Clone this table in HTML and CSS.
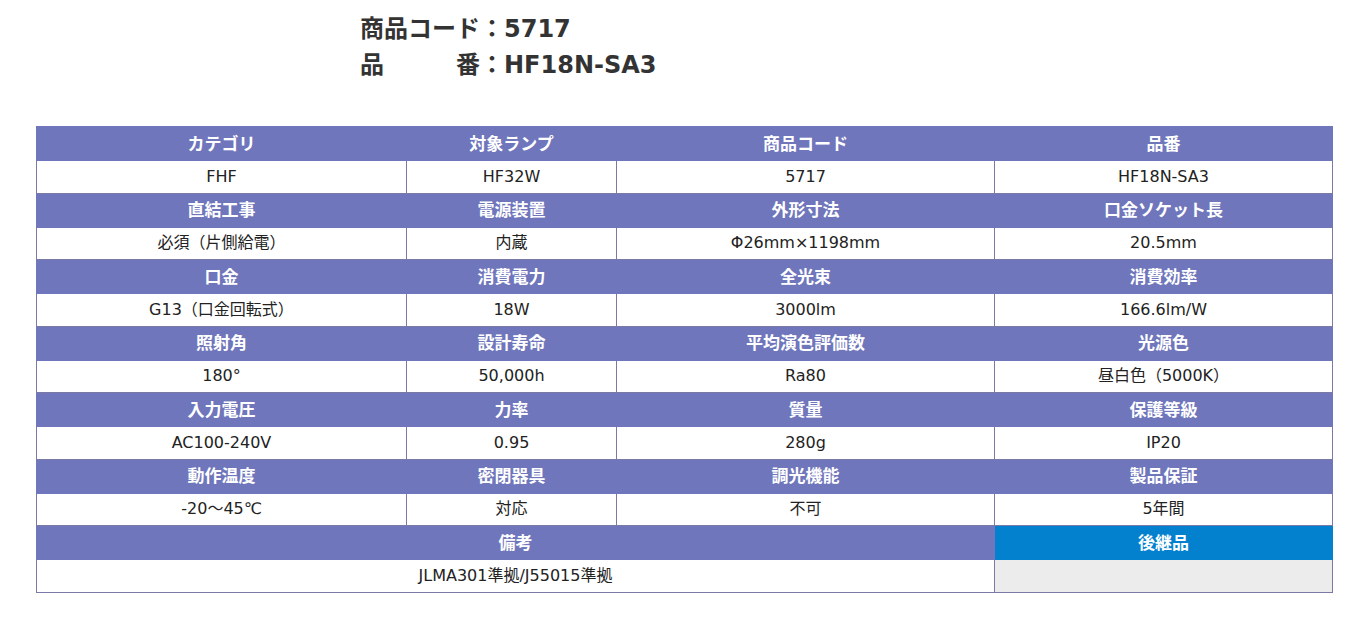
FILE: index.html
```html
<!DOCTYPE html>
<html lang="ja">
<head>
<meta charset="utf-8">
<title>HF18N-SA3</title>
<link rel="stylesheet" href="styles.css">
</head>
<body>
<div class="page">
  <div class="heading">
    <div class="heading-line">商品コード：5717</div>
    <div class="heading-line">品　　　番：HF18N-SA3</div>
  </div>
  <table class="spec">
    <colgroup>
      <col class="c1"><col class="c2"><col class="c3"><col class="c4">
    </colgroup>
    <tr class="hd"><th>カテゴリ</th><th>対象ランプ</th><th>商品コード</th><th>品番</th></tr>
    <tr class="dt"><td>FHF</td><td>HF32W</td><td>5717</td><td>HF18N-SA3</td></tr>
    <tr class="hd"><th>直結工事</th><th>電源装置</th><th>外形寸法</th><th>口金ソケット長</th></tr>
    <tr class="dt"><td>必須（片側給電）</td><td>内蔵</td><td>Φ26mm×1198mm</td><td>20.5mm</td></tr>
    <tr class="hd"><th>口金</th><th>消費電力</th><th>全光束</th><th>消費効率</th></tr>
    <tr class="dt"><td>G13（口金回転式）</td><td>18W</td><td>3000lm</td><td>166.6lm/W</td></tr>
    <tr class="hd"><th>照射角</th><th>設計寿命</th><th>平均演色評価数</th><th>光源色</th></tr>
    <tr class="dt"><td>180°</td><td>50,000h</td><td>Ra80</td><td>昼白色（5000K）</td></tr>
    <tr class="hd"><th>入力電圧</th><th>力率</th><th>質量</th><th>保護等級</th></tr>
    <tr class="dt"><td>AC100-240V</td><td>0.95</td><td>280g</td><td>IP20</td></tr>
    <tr class="hd"><th>動作温度</th><th>密閉器具</th><th>調光機能</th><th>製品保証</th></tr>
    <tr class="dt"><td>-20～45℃</td><td>対応</td><td>不可</td><td>5年間</td></tr>
    <tr class="hd"><th colspan="3">備考</th><th class="succ">後継品</th></tr>
    <tr class="dt"><td colspan="3">JLMA301準拠/J55015準拠</td><td class="empty"></td></tr>
  </table>
</div>
</body>
</html>
```

FILE: styles.css
```css
html, body {
  margin: 0;
  padding: 0;
  background: #ffffff;
}
.page {
  padding: 11px 35px 0 36px;
  font-family: "DejaVu Sans", "Noto Sans CJK JP", sans-serif;
  color: #333333;
}
.heading {
  padding-left: 324px;
  margin-bottom: 43px;
}
.heading-line {
  font-size: 24px;
  font-weight: bold;
  line-height: 36px;
  color: #333333;
}
.spec {
  width: 1296px;
  border-collapse: collapse;
  table-layout: fixed;
  border: 1px solid #7b79a6;
}
.c1 { width: 370px; }
.c2 { width: 210px; }
.c3 { width: 378px; }
.c4 { width: 338px; }
.spec th, .spec td {
  padding: 0;
  text-align: center;
  vertical-align: middle;
  font-size: 16px;
  line-height: 20px;
}
.spec th {
  height: 33px;
  background: #6f76bb;
  color: #ffffff;
  font-weight: bold;
  font-size: 17px;
  border: 1px solid #6f76bb;
}
.spec td {
  height: 31.5px;
  background: #ffffff;
  color: #222222;
  border: 1px solid #7b79a6;
}
.spec th.succ {
  background: #0381cf;
  border-color: #0381cf;
}
.spec td.empty {
  background: #ececec;
}
```
